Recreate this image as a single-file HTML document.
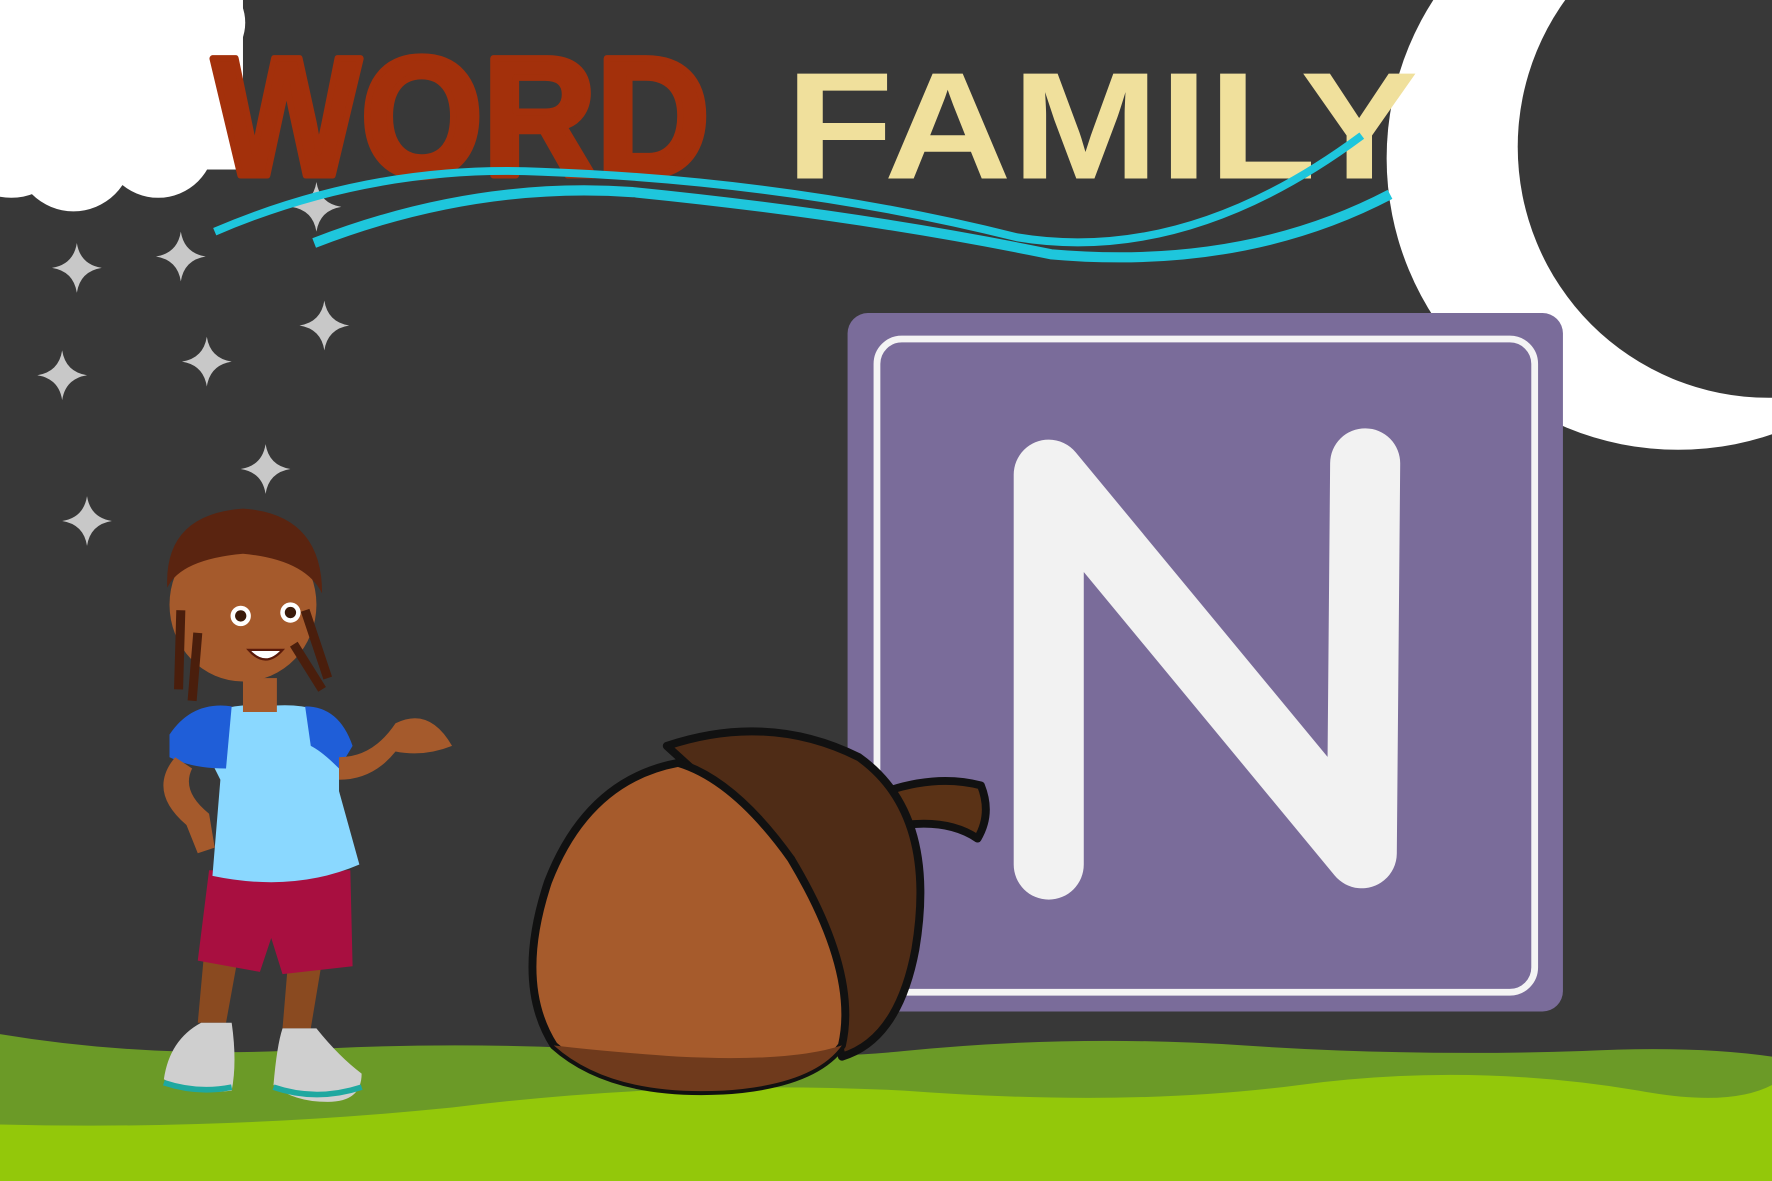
<!DOCTYPE html>
<html><head><meta charset="utf-8"><style>html,body{margin:0;padding:0;background:#383838;overflow:hidden}svg{display:block}</style></head>
<body>
<svg width="1772" height="1181" viewBox="0 0 1568 1045" preserveAspectRatio="none" xmlns="http://www.w3.org/2000/svg">
<defs>
<g id="st"><path d="M0,-22 Q3,-3 22,0 Q3,3 0,22 Q-3,3 -22,0 Q-3,-3 0,-22Z" fill="#c8c8c8"/></g>
</defs>
<rect width="1568" height="1045" fill="#383838"/>
<!-- cloud -->
<g fill="#fff">
<rect x="0" y="0" width="215" height="150"/>
<circle cx="175" cy="20" r="42"/>
<circle cx="140" cy="125" r="50"/>
<circle cx="65" cy="135" r="52"/>
<circle cx="10" cy="120" r="55"/>
<circle cx="185" cy="100" r="35"/>
</g>
<!-- moon -->
<circle cx="1485" cy="140" r="258" fill="#fff"/>
<circle cx="1565" cy="130" r="222" fill="#383838"/>
<!-- stars -->
<use href="#st" x="68" y="237"/><use href="#st" x="160" y="227"/><use href="#st" x="280" y="183"/>
<use href="#st" x="287" y="288"/><use href="#st" x="183" y="320"/><use href="#st" x="55" y="332"/>
<use href="#st" x="235" y="415"/><use href="#st" x="77" y="461"/>
<!-- title -->
<text x="188" y="155" font-family="Liberation Sans, sans-serif" font-weight="bold" font-size="150" fill="#a3300b" textLength="440" lengthAdjust="spacingAndGlyphs" stroke="#a3300b" stroke-width="6" stroke-linejoin="round">WORD</text>
<text x="695" y="158" font-family="Liberation Sans, sans-serif" font-weight="bold" font-size="135" fill="#f0e09c" textLength="560" lengthAdjust="spacingAndGlyphs">FAMILY</text>
<path d="M190,205 Q330,145 480,152 Q700,160 900,210 Q1050,235 1205,120" stroke="#1ec6dc" stroke-width="7" fill="none"/>
<path d="M278,215 Q420,160 560,170 Q760,190 930,225 Q1100,240 1230,172" stroke="#1ec6dc" stroke-width="9" fill="none"/>
<!-- purple card -->
<rect x="750" y="277" width="633" height="618" rx="18" fill="#7a6c9a"/>
<rect x="776" y="300" width="582" height="578" rx="22" fill="none" stroke="#f4f4f4" stroke-width="6"/>
<path d="M928,765 L928,420 L1205,755 L1208,410" stroke="#f2f2f2" stroke-width="62" fill="none" stroke-linecap="round" stroke-linejoin="round"/>
<!-- grass -->
<path d="M0,915 Q120,935 250,930 Q400,920 560,930 Q700,940 800,930 Q950,915 1100,925 Q1250,935 1400,930 Q1500,925 1568,935 L1568,1045 L0,1045Z" fill="#6b9a27"/>
<path d="M0,995 Q200,1000 400,980 Q600,955 800,965 Q1000,980 1150,960 Q1300,940 1450,965 Q1530,980 1568,960 L1568,1045 L0,1045Z" fill="#93c80a"/>
<!-- acorn -->
<g stroke="#111" stroke-width="7" stroke-linejoin="round">
<path d="M785,700 Q830,685 868,695 Q878,720 865,742 Q840,725 800,730Z" fill="#5a3216"/>
<path d="M590,660 Q680,630 760,670 Q830,720 810,840 Q795,920 745,935 L700,760Z" fill="#4f2c16"/>
<path d="M600,675 Q520,690 485,780 Q455,870 490,925 Q540,970 640,965 Q720,960 745,925 Q760,860 700,760 Q650,690 600,675Z" fill="#a65b2c"/>
</g>
<path d="M490,925 Q540,970 640,965 Q720,960 745,925 Q700,940 600,935 Q530,930 490,925Z" fill="#6f3a1c"/>
<!-- boy -->
<g>
<path d="M180,850 L175,905 L200,905 L210,850Z M255,850 L250,910 L275,910 L285,850Z" fill="#8a4a20"/>
<path d="M145,955 Q150,920 178,905 L205,905 Q210,940 205,965 Q170,970 145,955Z" fill="#cfcfcf"/>
<path d="M242,960 Q245,925 250,910 L280,910 Q300,935 320,950 Q320,975 290,975 Q260,975 242,960Z" fill="#cfcfcf"/>
<path d="M145,958 Q175,968 205,962" stroke="#1ea8a0" stroke-width="5" fill="none"/>
<path d="M242,962 Q280,975 320,962" stroke="#1ea8a0" stroke-width="5" fill="none"/>
<path d="M185,770 L310,770 L312,855 L250,862 L240,830 L230,860 L175,850Z" fill="#a80f40"/>
<path d="M170,640 Q200,620 235,625 Q280,620 300,640 L300,700 L318,765 Q260,790 188,775 L195,690Z" fill="#8ad8ff"/>
<path d="M150,650 Q170,620 205,625 L200,680 Q170,680 150,670Z" fill="#1f5ed8"/>
<path d="M270,625 Q300,625 312,660 L300,680 Q285,665 275,660Z" fill="#1f5ed8"/>
<path d="M155,670 Q130,700 165,730 L175,755 L190,750 L185,720 Q160,700 170,680Z" fill="#a55a2c"/>
<path d="M300,670 Q330,670 350,640 Q380,625 400,660 Q375,670 350,665 Q330,690 300,690Z" fill="#a55a2c"/>
<rect x="215" y="600" width="30" height="30" fill="#a55a2c"/>
<ellipse cx="215" cy="535" rx="65" ry="68" fill="#a55a2c"/>
<path d="M148,520 Q145,455 215,450 Q285,455 285,525 Q270,495 215,490 Q160,495 148,520Z" fill="#5a2410"/>
<path d="M160,540 L158,610 M175,560 L170,620 M270,540 L290,600 M260,570 L285,610" stroke="#4a1e0c" stroke-width="8"/>
<circle cx="213" cy="545" r="9" fill="#fff"/><circle cx="257" cy="542" r="9" fill="#fff"/>
<circle cx="213" cy="545" r="5" fill="#3a1a0a"/><circle cx="257" cy="542" r="5" fill="#3a1a0a"/>
<path d="M220,575 Q235,592 250,575Z" fill="#fff" stroke="#5a1a0a" stroke-width="2"/>
</g>
</svg>
</body></html>
